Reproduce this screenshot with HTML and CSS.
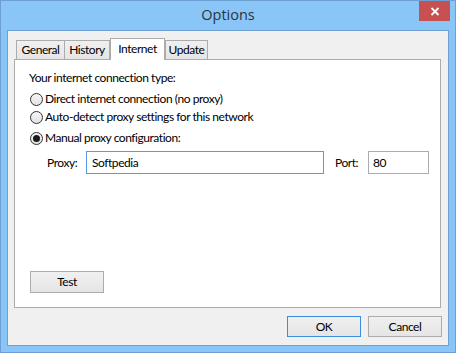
FILE: index.html
```html
<!DOCTYPE html>
<html>
<head>
<meta charset="utf-8">
<link rel="stylesheet" href="styles.css">
</head>
<body>
<div class="window">
  <div class="titlebar">
    <div class="title">Options</div>
    <div class="close">
      <svg width="10" height="9" viewBox="0 0 10 9"><path d="M1.5 1 L8.5 8 M8.5 1 L1.5 8" stroke="#fff" stroke-width="1.8" fill="none"/></svg>
    </div>
  </div>
  <div class="client">
    <div class="tabs">
      <div class="tab t-general">General</div>
      <div class="tab t-history">History</div>
      <div class="tab active t-internet">Internet</div>
      <div class="tab t-update">Update</div>
    </div>
    <div class="panel">
      <div class="heading">Your internet connection type:</div>
      <div class="radio-row r1"><span class="radio"></span>Direct internet connection (no proxy)</div>
      <div class="radio-row r2"><span class="radio"></span>Auto-detect proxy settings for this network</div>
      <div class="radio-row r3"><span class="radio checked"></span>Manual proxy configuration:</div>
      <div class="proxy-row">
        <span class="lbl-proxy">Proxy:</span>
        <div class="input focus">Softpedia</div>
        <span class="lbl-port">Port:</span>
        <div class="input port">80</div>
      </div>
      <div class="btn test">Test</div>
    </div>
    <div class="footer">
      <div class="btn default">OK</div>
      <div class="btn">Cancel</div>
    </div>
  </div>
</div>
</body>
</html>
```
FILE: styles.css
```css
html, body {
  margin: 0;
  padding: 0;
  background: #8ac5f7;
}
body {
  font-family: "Lato", "Open Sans", sans-serif;
  font-size: 12px;
  letter-spacing: -0.45px;
  color: #000;
}
.window {
  width: 456px;
  height: 353px;
  box-sizing: border-box;
  border: 1px solid #6d9fd2;
  background: #8ac5f7;
  display: flex;
  flex-direction: column;
}
.titlebar {
  height: 29px;
  display: flex;
  justify-content: center;
  position: relative;
}
.title {
  font-family: "Open Sans", sans-serif;
  font-size: 14.5px;
  letter-spacing: 0;
  color: #2a3440;
  line-height: 27px;
}
.close {
  position: absolute;
  right: 5px;
  top: 0;
  width: 31px;
  height: 20px;
  background: #c75050;
  display: flex;
  align-items: center;
  justify-content: center;
}
.client {
  margin: 0 6px 6px 6px;
  flex: 1;
  border: 1px solid #6f9fcf;
  background: #f0f0f0;
  display: flex;
  flex-direction: column;
  padding: 7px 6px 0 6px;
}
.tabs {
  display: flex;
  align-items: flex-end;
  padding-left: 2px;
  height: 21px;
}
.tab {
  height: 18px;
  line-height: 18px;
  box-sizing: content-box;
  border: 1px solid #acacac;
  border-bottom: none;
  background: linear-gradient(#f0f0f0, #e5e5e5);
  text-align: center;
  color: #000;
}
.t-general { width: 47px; }
.t-history { width: 44px; margin-left: -1px; }
.t-internet { width: 53px; }
.t-update { width: 41px; }
.tab.active {
  height: 21px;
  line-height: 19px;
  background: #fff;
  margin-bottom: -1px;
  position: relative;
  z-index: 1;
}
.panel {
  width: 427px;
  height: 249px;
  box-sizing: border-box;
  border: 1px solid #acacac;
  background: #fff;
  display: flex;
  flex-direction: column;
  padding: 10px 0 14px 14px;
}
.heading {
  line-height: 16px;
  height: 16px;
}
.radio-row {
  display: flex;
  align-items: center;
  height: 16px;
  line-height: 16px;
}
.r1 { margin-top: 5px; }
.r2 { margin-top: 2px; }
.r3 { margin-top: 5px; }
.radio {
  width: 11px;
  height: 11px;
  border: 1px solid #333;
  border-radius: 50%;
  background: linear-gradient(#f6f6f6, #e2e2e2);
  margin: 0 2px 0 1px;
  display: flex;
  align-items: center;
  justify-content: center;
  flex: none;
}
.radio.checked::after {
  content: "";
  width: 7px;
  height: 7px;
  border-radius: 50%;
  background: #1a1a1a;
}
.proxy-row {
  margin-top: 5px;
  display: flex;
  align-items: center;
  height: 23px;
}
.lbl-proxy {
  margin-left: 18px;
  width: 39px;
}
.input {
  height: 23px;
  box-sizing: border-box;
  border: 1px solid #acacac;
  line-height: 21px;
  padding-left: 5px;
  background: #fff;
}
.input.focus {
  width: 238px;
  border-color: #569de5;
}
.lbl-port {
  margin-left: 11px;
  width: 33px;
}
.input.port {
  width: 61px;
  padding-left: 4px;
}
.btn {
  width: 74px;
  height: 22px;
  box-sizing: border-box;
  border: 1px solid #acacac;
  background: linear-gradient(#f0f0f0, #e5e5e5);
  text-align: center;
  line-height: 20px;
}
.btn.test {
  margin-top: auto;
  margin-left: 1px;
}
.footer {
  display: flex;
  justify-content: flex-end;
  gap: 7px;
  margin-top: 8px;
}
.footer .btn { height: 21px; line-height: 19px; }
.btn.default {
  border-color: #3c8de0;
}
```
